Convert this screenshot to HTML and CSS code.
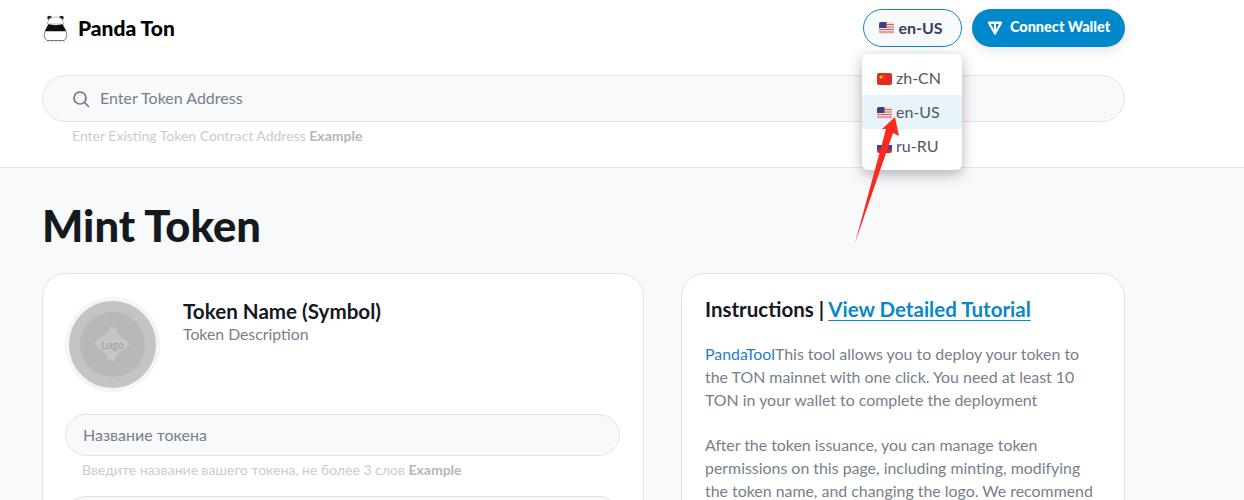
FILE: index.html
```html
<!DOCTYPE html>
<html lang="en">
<head>
<meta charset="utf-8">
<title>Panda Ton</title>
<link rel="stylesheet" href="styles.css">
</head>
<body>
<header class="header">
  <div class="wrap">
    <div class="topbar">
      <div class="brand">
        <svg class="brand-logo" viewBox="0 0 28 28" aria-hidden="true">
          <ellipse cx="7.500" cy="2.800" rx="2.300" ry="2" fill="#222"/><ellipse cx="19.500" cy="2.800" rx="2.300" ry="2" fill="#222"/>
          <path d="M5 9 7.500 3.500C11 1.500 16 1.500 19.500 3.500L22 9z" fill="#fff" stroke="#777" stroke-width=".5"/>
          <path d="M6.500 9c3 1.500 11 1.500 14 0l4 7.500H2.500z" fill="#111"/>
          <path d="M3 16.500c-1.500 4-.5 7.500 2 9h17c2.500-1.500 3.500-5 2-9" fill="#fff" stroke="#555" stroke-width=".8"/>
          <path d="M1 26.800h25" stroke="#aaa" stroke-width=".5" stroke-dasharray="2 2"/>
        </svg>
        <span class="brand-name">Panda Ton</span>
      </div>
      <div class="actions">
        <button class="lang-btn">
          <svg class="flag" viewBox="0 0 15 12"><use href="#us"/></svg>
          en-US
        </button>
        <button class="connect-btn">
          <svg class="ton" viewBox="0 0 16 16"><path d="M2.200 1.500h11.600c1.100 0 1.700 1.100 1.200 2L8.700 14.500c-.3.500-1.100.5-1.400 0L1 3.500c-.5-.9.100-2 1.200-2zM3.800 4 7 9.800V4zM9 4v5.800L12.200 4z" fill="#fff" fill-rule="evenodd"/></svg>
          <span class="connect-label">Connect Wallet</span>
        </button>
      </div>
    </div>
    <div class="search field">
      <svg class="search-icon" viewBox="0 0 18 18"><circle cx="8" cy="8" r="6" fill="none" stroke="#6f7a86" stroke-width="1.700"/><path d="M12.500 12.500 16.500 16.500" stroke="#6f7a86" stroke-width="1.700" stroke-linecap="round"/></svg>
      <span class="placeholder">Enter Token Address</span>
    </div>
    <p class="hint search-hint">Enter Existing Token Contract Address <b>Example</b></p>
  </div>
</header>

<main class="wrap">
  <h1 class="title">Mint Token</h1>
  <div class="columns">
    <section class="card form-card">
      <div class="token-head">
        <div class="avatar">
          <div class="avatar-inner">
            <svg class="avatar-star" viewBox="0 0 34 34"><path d="M17 0c3.500 0 5 5 7.500 8.500S34 13.500 34 17s-6 6-9.500 8.500S20.500 34 17 34s-5-5-7.500-8.500S0 20.500 0 17s6-6 9.500-8.500S13.500 0 17 0z" fill="#c6c6c6"/></svg>
            <span class="avatar-text">Logo</span>
          </div>
        </div>
        <div class="token-info">
          <div class="token-name">Token Name (Symbol)</div>
          <div class="token-desc">Token Description</div>
        </div>
      </div>
      <div class="field form-field"><span class="placeholder">Название токена</span></div>
      <p class="hint form-hint">Введите название вашего токена, не более 3 слов <b>Example</b></p>
      <div class="field form-field"></div>
    </section>
    <section class="card info-card">
      <h2 class="info-title">Instructions | <a class="info-link">View Detailed Tutorial</a></h2>
      <p class="info-text"><span class="brand-word">PandaTool</span>This tool allows you to deploy your token to the TON mainnet with one click. You need at least 10 TON in your wallet to complete the deployment</p>
      <p class="info-text">After the token issuance, you can manage token permissions on this page, including minting, modifying the token name, and changing the logo. We recommend</p>
    </section>
  </div>
</main>

<ul class="menu">
  <li class="menu-item">
    <svg class="flag" viewBox="0 0 15 12"><rect width="15" height="12" rx="2" fill="#e02d20"/><circle cx="4" cy="4" r="1.500" fill="#f8d81c"/><circle cx="7" cy="2.500" r=".5" fill="#f8d81c"/><circle cx="7.500" cy="5" r=".5" fill="#f8d81c"/></svg>
    zh-CN
  </li>
  <li class="menu-item is-active">
    <svg class="flag" viewBox="0 0 15 12"><use href="#us"/></svg>
    en-US
  </li>
  <li class="menu-item">
    <svg class="flag" viewBox="0 0 15 12"><rect width="15" height="12" rx="2" fill="#fff"/><path d="M0 4h15v4H0z" fill="#2b45b4"/><path d="M0 8h15v2a2 2 0 0 1-2 2H2a2 2 0 0 1-2-2z" fill="#d8262c"/></svg>
    ru-RU
  </li>
</ul>

<svg class="arrow" viewBox="0 0 60 140" aria-hidden="true"><path d="M0 128 31 14 27 14 40 2 44 21 38 18Z" fill="#fb2a1e"/></svg>

<svg class="defs" width="0" height="0" aria-hidden="true">
  <symbol id="us" viewBox="0 0 15 12">
    <rect width="15" height="12" rx="2" fill="#f4d8d8"/>
    <path d="M0 2.500h15M0 5h15M0 7.500h15M0 10h15" stroke="#d9646a" stroke-width="1.200"/>
    <path d="M2 0h5.500v6H0V2a2 2 0 0 1 2-2z" fill="#39427c"/>
  </symbol>
</svg>
</body>
</html>
```
FILE: styles.css
```css
* { box-sizing: border-box; }
html, body { margin: 0; height: 100%; overflow: hidden; }
body {
  position: relative;
  background: #f7f9fb;
  color: #14181f;
  font-family: "Lato", "Noto Sans", sans-serif;
}
.wrap { width: 1083px; margin-left: 42px; }
.header { height: 168px; background: #fff; border-bottom: 1px solid #e4e7ea; padding-top: 9px; }
.topbar { display: flex; justify-content: space-between; align-items: center; height: 38px; }
.brand { display: flex; align-items: center; gap: 8px; }
.brand-logo { width: 28px; height: 28px; margin-top: 2px; }
.brand-name { font-size: 21px; font-weight: 900; color: #000; margin-top: -2px; }
.actions { display: flex; gap: 10px; }
.lang-btn, .connect-btn {
  display: flex; align-items: center; justify-content: center;
  height: 38px; border-radius: 19px; font-family: inherit; padding: 0;
}
.lang-btn { width: 99px; gap: 4px; padding: 0 3px 2px 0; background: #f7f9fb; border: 1px solid #0a88cb; font-size: 16px; font-weight: 700; color: #34405a; }
.lang-btn .flag { margin-top: 2px; }
.connect-btn { width: 153px; gap: 7px; background: #0088cc; border: 0; color: #fff; font-size: 14.500px; font-weight: 900; box-shadow: 0 4px 12px rgba(0,0,0,.1); }
.connect-label { margin-top: -3px; }
.flag { width: 15px; height: 12px; flex: none; }
.ton { width: 16px; height: 16px; }
.field { display: flex; align-items: center; background: #f7f9fb; border: 1px solid #e1e5ea; border-radius: 24px; }
.search { height: 47px; margin-top: 28px; padding-left: 29px; gap: 10px; }
.search-icon { width: 18px; height: 18px; }
.placeholder { font-size: 16px; color: #76808c; margin-top: -2px; }
.hint { margin: 0; font-size: 14px; color: #c9cccf; }
.hint b { color: #b5b7ba; }
.search-hint { margin: 5px 0 0 30px; }
.title { margin: 32px 0 0; font-size: 43.500px; line-height: 50px; font-weight: 900; color: #14181f; }
.columns { display: flex; gap: 37px; margin-top: 23px; align-items: flex-start; }
.card { background: #fff; border: 1px solid #e1e5ea; border-radius: 24px; }
.form-card { width: 602px; height: 400px; padding: 23px 23px 0 22px; }
.info-card { width: 444px; height: 400px; padding: 22px 23px 0 23px; }
.token-head { display: flex; gap: 23px; }
.avatar { width: 95px; height: 95px; border-radius: 50%; border: 4px solid #f4f5f6; background: #c4c4c4; display: flex; align-items: center; justify-content: center; }
.avatar-inner { position: relative; width: 65px; height: 65px; border-radius: 50%; background: #b8b8b8; display: flex; align-items: center; justify-content: center; }
.avatar-star { position: absolute; left: 15px; top: 15px; width: 34px; height: 34px; }
.avatar-text { position: relative; font-size: 10.500px; color: #a0a0a0; }
.token-info { padding-top: 2px; }
.token-name { font-size: 20.600px; line-height: 24px; font-weight: 700; color: #14181f; }
.token-desc { font-size: 15.800px; line-height: 22px; color: #76808c; }
.form-field { height: 42px; border-radius: 21px; padding-left: 17px; }
.token-head + .form-field { margin-top: 22px; }
.form-hint { margin: 5px 0 18px 17px; }
.info-title { margin: 0; font-size: 20.500px; line-height: 26px; font-weight: 700; }
.info-link { color: #0a86c9; text-decoration: underline; text-decoration-thickness: 1px; text-underline-offset: 3px; }
.info-text { margin: 22.800px 0 0; font-size: 15.900px; line-height: 22.800px; color: #76808c; }
.info-title + .info-text { margin-top: 21px; }
.brand-word { color: #1f7fc4; }
.menu { position: absolute; left: 862px; top: 54px; width: 100px; height: 116px; margin: 0; padding: 7px 0 0; list-style: none; background: #fff; border-radius: 6px; box-shadow: 0 4px 14px rgba(0,0,0,.3); }
.menu-item { display: flex; align-items: center; gap: 4px; height: 34px; padding: 0 0 2px 15px; font-size: 16px; color: #4d5568; }
.menu-item .flag { margin-top: 4px; }
.menu-item.is-active { background: #e8f4fa; }
.arrow { position: absolute; left: 855px; top: 115px; width: 60px; height: 140px; }
.defs { position: absolute; }
```
